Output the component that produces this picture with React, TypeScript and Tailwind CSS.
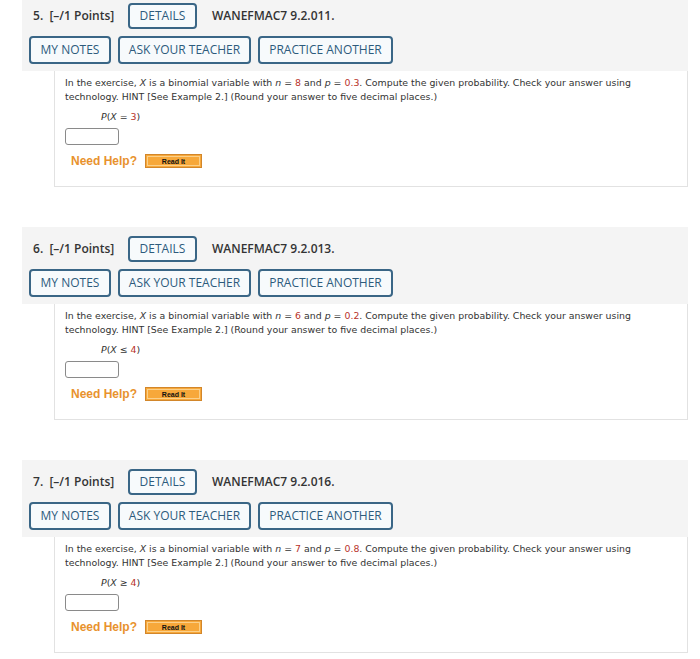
import React from "react";

type Q = {
  num: number;
  code: string;
  n: string;
  p: string;
  op: string;
  k: string;
};

const qs: Q[] = [
  { num: 5, code: "WANEFMAC7 9.2.011.", n: "8", p: "0.3", op: "=", k: "3" },
  { num: 6, code: "WANEFMAC7 9.2.013.", n: "6", p: "0.2", op: "≤", k: "4" },
  { num: 7, code: "WANEFMAC7 9.2.016.", n: "7", p: "0.8", op: "≥", k: "4" },
];

const btn =
  "flex items-center justify-center border-2 border-[#3a6686] rounded-[4px] bg-[#f7fafc] text-[#2d5b7c] text-[12px] font-medium";

function Question({ q, first }: { q: Q; first: boolean }) {
  return (
    <div className={first ? "mt-[-6px]" : "mt-[40px]"}>
      <div className="ml-[22px] w-[666px] h-[77px] bg-[#f4f4f4] flex flex-col" style={{ fontFamily: '"Open Sans", "Liberation Sans", sans-serif' }}>
        <div className="flex items-center mt-[9px] pl-[11px] h-[26px]">
          <span className="text-[12px] font-semibold text-[#333] w-[95px]">
            {q.num}.&nbsp; [–/1 Points]
          </span>
          <div className={btn + " w-[69px] h-[26px]"}>DETAILS</div>
          <span className="ml-[15px] text-[12px] font-semibold text-[#333]">{q.code}</span>
        </div>
        <div className="flex items-center mt-[7px] pl-[7px] gap-[7px]">
          <div className={btn + " w-[82px] h-[28px]"}>MY NOTES</div>
          <div className={btn + " w-[133px] h-[28px]"}>ASK YOUR TEACHER</div>
          <div className={btn + " w-[135px] h-[28px]"}>PRACTICE ANOTHER</div>
        </div>
      </div>
      <div
        className="ml-[54px] w-[634px] h-[116px] border border-t-0 border-[#e2e2e2] bg-white pl-[10px] pt-[5px] text-[#333]"
        style={{ fontFamily: '"DejaVu Sans", Verdana, sans-serif' }}
      >
        <div className="text-[9.4px] leading-[14px] whitespace-nowrap">
          In the exercise, <i>X</i> is a binomial variable with <i>n</i> ={" "}
          <span className="text-[#b8322a]">{q.n}</span> and <i>p</i> ={" "}
          <span className="text-[#b8322a]">{q.p}</span>. Compute the given probability. Check your answer using
          <br />
          technology. HINT [See Example 2.] (Round your answer to five decimal places.)
        </div>
        <div className="text-[9.4px] leading-[14px] mt-[6px] ml-[36px]">
          <i>P</i>(<i>X</i> {q.op} <span className="text-[#b8322a]">{q.k}</span>)
        </div>
        <div className="mt-[4px] w-[54px] h-[17px] border border-[#8a8a8a] rounded-[3px] bg-white" />
        <div className="mt-[9px] ml-[6px] flex items-center h-[14px]" style={{ fontFamily: '"Liberation Sans", Arial, sans-serif' }}>
          <span className="text-[12px] font-bold text-[#e8922e] leading-none">Need Help?</span>
          <div className="ml-[8px] w-[57px] h-[14px] bg-[#f7a83a] border border-[#d2862a] flex items-center justify-center p-[1px]">
            <div className="w-full h-full border border-[#fbd08a] flex items-center justify-center">
              <span className="text-[7px] font-bold text-[#111] leading-none">Read It</span>
            </div>
          </div>
        </div>
      </div>
    </div>
  );
}

export default function App() {
  return (
    <div className="w-[700px] h-[659px] bg-white overflow-hidden">
      {qs.map((q, i) => (
        <Question key={q.num} q={q} first={i === 0} />
      ))}
    </div>
  );
}
